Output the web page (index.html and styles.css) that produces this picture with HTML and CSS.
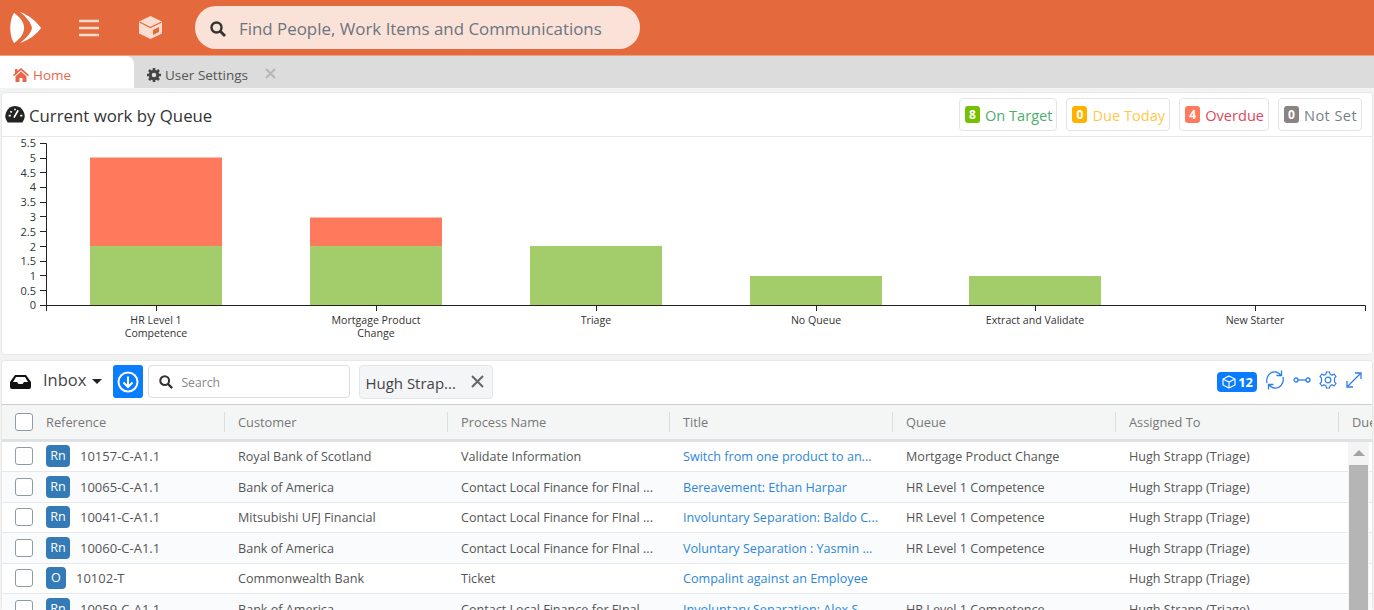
FILE: index.html
```html
<!DOCTYPE html>
<html lang="en">
<head>
    <meta charset="UTF-8">
    <meta name="viewport" content="width=device-width, initial-scale=1.0">
    <title>Home</title>
    <link rel="stylesheet" href="styles.css">
</head>
<body>
    <header class="topbar">
        <svg class="logo" width="32" height="32" viewBox="0 0 32 32"><path fill="#fff" d="M4 1C10 5 14 10 14 16C14 22 10 27 4 31C-1 24 -1 8 4 1Z"/><path fill="#fff" d="M10 0C19 3 27 10 31 16C27 22 19 28 10 31C15 27 21 22 22 16C21 10 15 4 10 0Z"/></svg>
        <svg class="menu" width="22" height="18" viewBox="0 0 22 18"><path stroke="#fbdccf" stroke-width="2.600" d="M1 2H21M1 9H21M1 16H21"/></svg>
        <svg class="cube" width="25" height="25" viewBox="0 0 25 25"><path fill="#fbdccf" d="M12.500 1L24 6.500V18.500L12.500 24L1 18.500V6.500Z"/><path fill="none" stroke="#e4693c" stroke-width="1.200" d="M1.500 7L12.500 12.500L23.500 7"/><path fill="#e4693c" d="M15 15L21 12V17L15 20Z"/></svg>
        <div class="find">
            <svg width="16" height="16" viewBox="0 0 16 16"><circle cx="6.500" cy="6.500" r="5" fill="none" stroke="#333" stroke-width="2.400"/><path stroke="#333" stroke-width="2.800" d="M10 10L15 15"/></svg>
            <span>Find People, Work Items and Communications</span>
        </div>
    </header>

    <nav class="tabs">
        <div class="tab active">
            <svg width="16" height="14" viewBox="0 0 16 14"><path fill="#e9654b" d="M8 0L16 7L15 8.300L8 2.300L1 8.300L0 7L2 5.200V1H4.500V3L8 0ZM8 3.500L13.500 8.200V14H9.500V10H6.500V14H2.500V8.200Z"/></svg>
            Home
        </div>
        <div class="tab">
            <svg width="14" height="14" viewBox="0 0 14 14"><circle cx="7" cy="7" r="3.800" fill="none" stroke="#444" stroke-width="3"/><path stroke="#444" stroke-width="2.600" d="M7 0V3M7 11V14M0 7H3M11 7H14M2 2L4 4M10 10L12 12M12 2L10 4M4 10L2 12"/></svg>
            User Settings
            <svg class="tab-close" width="11" height="11" viewBox="0 0 11 11"><path stroke="#b5b5b5" stroke-width="1.800" d="M1 1L10 10M10 1L1 10"/></svg>
        </div>
    </nav>

    <section class="card chart-card">
        <div class="card-head">
            <svg width="20" height="17" viewBox="0.500 1 19 16"><path fill="#222" d="M10 1A9.500 9.500 0 0 1 17 16.500H3A9.500 9.500 0 0 1 10 1Z"/><path stroke="#fff" stroke-width="1.600" d="M9 12L13 5M4 10H6M5.500 6L7 7M10 3.500V5M15 10H17"/></svg>
            <h2>Current work by Queue</h2>
            <div class="legend">
                <span class="pill green"><b>8</b>On Target</span>
                <span class="pill amber"><b>0</b>Due Today</span>
                <span class="pill red"><b>4</b>Overdue</span>
                <span class="pill grey"><b>0</b>Not Set</span>
            </div>
        </div>
        <svg class="chart" width="1372" height="217" viewBox="0 137 1372 217">
            <g fill="#ff7a5c">
                <rect x="90" y="157.500" width="132" height="89"/>
                <rect x="310" y="217.500" width="132" height="29"/>
            </g>
            <g fill="#a3cc6a">
                <rect x="90" y="246" width="132" height="59"/>
                <rect x="310" y="246" width="132" height="59"/>
                <rect x="530" y="246" width="132" height="59"/>
                <rect x="750" y="276" width="132" height="29"/>
                <rect x="969" y="276" width="132" height="29"/>
            </g>
            <path fill="none" stroke="#222" d="M40 143.500H46.500V305.500M40 158.500H46M40 172.500H46M40 187.500H46M40 202.500H46M40 216.500H46M40 231.500H46M40 246.500H46M40 261.500H46M40 275.500H46M40 290.500H46M40 305.500H1365.500V311M46.500 305V311M156.500 305V311M376.500 305V311M596.500 305V311M816.500 305V311M1035.500 305V311M1255.500 305V311"/>
            <g class="y-labels">
                <text x="36" y="147">5.5</text><text x="36" y="162">5</text><text x="36" y="177">4.5</text><text x="36" y="191">4</text><text x="36" y="206">3.5</text><text x="36" y="221">3</text><text x="36" y="236">2.5</text><text x="36" y="251">2</text><text x="36" y="265">1.5</text><text x="36" y="280">1</text><text x="36" y="295">0.5</text><text x="36" y="309">0</text>
            </g>
            <g class="x-labels">
                <text x="156" y="324">HR Level 1</text><text x="156" y="337">Competence</text>
                <text x="376" y="324">Mortgage Product</text><text x="376" y="337">Change</text>
                <text x="596" y="324">Triage</text>
                <text x="816" y="324">No Queue</text>
                <text x="1035" y="324">Extract and Validate</text>
                <text x="1255" y="324">New Starter</text>
            </g>
        </svg>
    </section>

    <section class="card inbox-card">
        <div class="toolbar">
            <svg width="21" height="14" viewBox="0 0 21 14"><path fill="#111" fill-rule="evenodd" d="M5 0H16L21 7V12A2 2 0 0 1 19 14H2A2 2 0 0 1 0 12V7ZM6 2L3 7H7L8.500 9H12.500L14 7H18L15 2Z"/></svg>
            <span class="inbox-name">Inbox</span>
            <span class="caret"></span>
            <button class="download"><svg width="22" height="22" viewBox="0 0 22 22"><circle cx="11" cy="11" r="9.500" fill="none" stroke="#fff" stroke-width="2"/><path fill="none" stroke="#fff" stroke-width="2" d="M11 5.500V16M6.500 11.500L11 16L15.500 11.500"/></svg></button>
            <div class="search">
                <svg width="14" height="14" viewBox="0 0 16 16"><circle cx="6.500" cy="6.500" r="5" fill="none" stroke="#333" stroke-width="2.400"/><path stroke="#333" stroke-width="2.800" d="M10 10L15 15"/></svg>
                <span>Search</span>
            </div>
            <div class="filter">
                <span>Hugh Strap...</span>
                <svg width="13" height="13" viewBox="0 0 13 13"><path stroke="#666" stroke-width="2" d="M1 1L12 12M12 1L1 12"/></svg>
            </div>
            <div class="tools">
                <span class="count"><svg width="14" height="14" viewBox="0 0 14 14"><path fill="none" stroke="#fff" stroke-width="1.200" d="M7 1L13 4V10L7 13L1 10V4ZM1 4L7 7L13 4M7 7V13"/></svg>12</span>
                <svg width="20" height="20" viewBox="0 0 20 20"><path fill="none" stroke="#2f7fe8" stroke-width="1.300" d="M2 13C0.500 7 5 1 11 2C13 2.500 15 4 16 5M18 7C19.500 13 15 19 9 18C7 17.500 5 16 4 15M16.500 0.500V5.500H11.500M3.500 19.500V14.500H8.500"/></svg>
                <svg width="18" height="8" viewBox="0 0 18 8"><path fill="none" stroke="#2f7fe8" stroke-width="1.300" d="M5 4H13"/><circle cx="3" cy="4" r="2" fill="none" stroke="#2f7fe8" stroke-width="1.300"/><circle cx="15" cy="4" r="2" fill="none" stroke="#2f7fe8" stroke-width="1.300"/></svg>
                <svg width="18" height="18" viewBox="0 0 18 18"><circle cx="9" cy="9" r="2.800" fill="none" stroke="#2f7fe8" stroke-width="1.200"/><path fill="none" stroke="#2f7fe8" stroke-width="1.200" d="M7.500 1H10.500L11 3.200L13 4.200L15 3L17 5.500L15.500 7.200V10.800L17 12.500L15 15L13 13.800L11 14.800L10.500 17H7.500L7 14.800L5 13.800L3 15L1 12.500L2.500 10.800V7.200L1 5.500L3 3L5 4.200L7 3.200Z"/></svg>
                <svg width="18" height="18" viewBox="0 0 18 18"><path fill="none" stroke="#2f7fe8" stroke-width="1.300" d="M2 16L16 2M10 2H16V8M2 10V16H8"/></svg>
            </div>
        </div>

        <div class="grid">
            <div class="row head">
                <div class="cell first"><span class="check"></span>Reference</div>
                <div class="cell">Customer</div>
                <div class="cell">Process Name</div>
                <div class="cell">Title</div>
                <div class="cell">Queue</div>
                <div class="cell">Assigned To</div>
                <div class="cell">Due</div>
            </div>
            <div class="row">
                <div class="cell first"><span class="check"></span><span class="type">Rn</span><span class="ref">10157-C-A1.1</span></div>
                <div class="cell">Royal Bank of Scotland</div>
                <div class="cell">Validate Information</div>
                <div class="cell link">Switch from one product to an...</div>
                <div class="cell">Mortgage Product Change</div>
                <div class="cell">Hugh Strapp (Triage)</div>
            </div>
            <div class="row alt">
                <div class="cell first"><span class="check"></span><span class="type">Rn</span><span class="ref">10065-C-A1.1</span></div>
                <div class="cell">Bank of America</div>
                <div class="cell">Contact Local Finance for FInal ...</div>
                <div class="cell link">Bereavement: Ethan Harpar</div>
                <div class="cell">HR Level 1 Competence</div>
                <div class="cell">Hugh Strapp (Triage)</div>
            </div>
            <div class="row">
                <div class="cell first"><span class="check"></span><span class="type">Rn</span><span class="ref">10041-C-A1.1</span></div>
                <div class="cell">Mitsubishi UFJ Financial</div>
                <div class="cell">Contact Local Finance for FInal ...</div>
                <div class="cell link">Involuntary Separation: Baldo C...</div>
                <div class="cell">HR Level 1 Competence</div>
                <div class="cell">Hugh Strapp (Triage)</div>
            </div>
            <div class="row alt">
                <div class="cell first"><span class="check"></span><span class="type">Rn</span><span class="ref">10060-C-A1.1</span></div>
                <div class="cell">Bank of America</div>
                <div class="cell">Contact Local Finance for FInal ...</div>
                <div class="cell link">Voluntary Separation : Yasmin ...</div>
                <div class="cell">HR Level 1 Competence</div>
                <div class="cell">Hugh Strapp (Triage)</div>
            </div>
            <div class="row">
                <div class="cell first"><span class="check"></span><span class="type short">O</span><span class="ref">10102-T</span></div>
                <div class="cell">Commonwealth Bank</div>
                <div class="cell">Ticket</div>
                <div class="cell link">Compalint against an Employee</div>
                <div class="cell"></div>
                <div class="cell">Hugh Strapp (Triage)</div>
            </div>
            <div class="row alt">
                <div class="cell first"><span class="check"></span><span class="type">Rn</span><span class="ref">10059-C-A1.1</span></div>
                <div class="cell">Bank of America</div>
                <div class="cell">Contact Local Finance for FInal ...</div>
                <div class="cell link">Involuntary Separation: Alex S...</div>
                <div class="cell">HR Level 1 Competence</div>
                <div class="cell">Hugh Strapp (Triage)</div>
            </div>
            <div class="scrollbar"><span class="arrow"></span><span class="thumb"></span></div>
        </div>
    </section>
</body>
</html>
```

FILE: styles.css
```css
html, body {
    height: 100%;
    overflow: hidden;
}
body {
    font-family: "Open Sans", Arial, sans-serif;
    margin: 0;
    padding: 0;
    background-color: #f2f2f2;
    color: #444;
}
.topbar {
    height: 55px;
    background-color: #e4693c;
    display: flex;
    align-items: center;
    border-bottom: 1px solid #f0a080;
}
.logo {
    margin-left: 10px;
}
.menu {
    margin-left: 36px;
}
.cube {
    margin-left: 38px;
}
.find {
    margin-left: 32px;
    width: 445px;
    height: 43px;
    box-sizing: border-box;
    padding-left: 15px;
    padding-top: 2px;
    background-color: #fbe2d9;
    border-radius: 21px;
    display: flex;
    align-items: center;
    gap: 13px;
    font-size: 16.900px;
    color: #6c757d;
}
.tabs {
    height: 32px;
    background-color: #dcdcdc;
    display: flex;
}
.tab {
    display: flex;
    align-items: center;
    gap: 4px;
    font-size: 13.500px;
    padding-left: 13px;
    padding-top: 6px;
    box-sizing: border-box;
    color: #555;
}
.tab.active {
    width: 134px;
    background-color: #fff;
    color: #e9654b;
    border-radius: 0 8px 0 0;
}
.tab-close {
    margin-left: 13px;
    margin-top: -3px;
}
.card {
    background-color: #fff;
    border: 1px solid #e8e8e8;
    border-radius: 4px;
    box-sizing: border-box;
    margin: 0 1px;
}
.chart-card {
    margin-top: 4px;
    height: 263px;
}
.card-head {
    height: 43px;
    display: flex;
    align-items: center;
    gap: 4px;
    padding-left: 3px;
    border-bottom: 1px solid #e8e8e8;
}
h2 {
    margin: 0;
    padding-top: 2px;
    font-size: 16.800px;
    font-weight: 400;
    color: #333;
}
.legend {
    margin-left: auto;
    margin-right: 10px;
    display: flex;
    gap: 9px;
}
.pill {
    height: 33px;
    box-sizing: border-box;
    display: flex;
    align-items: center;
    gap: 5px;
    padding: 0 4px 0 5px;
    border: 1px solid #e4e4e4;
    border-radius: 4px;
    font-size: 14.600px;
}
.pill b {
    width: 15px;
    height: 17px;
    border-radius: 3px;
    color: #fff;
    font-size: 12px;
    text-align: center;
    line-height: 17px;
}
.green { color: #4cae6e; }
.green b { background-color: #76c000; }
.amber { color: #ffc84a; }
.amber b { background-color: #ffb300; }
.red { color: #e0485a; }
.red b { background-color: #ff7a5c; }
.grey { color: #777f88; letter-spacing: .4px; }
.grey b { background-color: #8a8380; }
.chart {
    display: block;
    margin-left: -2px;
}
.chart text {
    font-family: "Open Sans", Arial, sans-serif;
}
.y-labels text {
    font-size: 11px;
    text-anchor: end;
    fill: #333;
}
.x-labels text {
    font-size: 10.600px;
    text-anchor: middle;
    fill: #333;
}
.inbox-card {
    margin-top: 5px;
    height: 250px;
}
.toolbar {
    height: 43px;
    display: flex;
    align-items: center;
    padding-left: 8px;
    padding-bottom: 2px;
    box-sizing: border-box;
}
.inbox-name {
    margin-left: 12px;
    font-size: 16.500px;
    color: #444;
    margin-top: -5px;
}
.caret {
    margin-left: 6px;
    margin-top: -1px;
    border-left: 5px solid transparent;
    border-right: 5px solid transparent;
    border-top: 5px solid #222;
}
.download {
    margin-left: 11px;
    width: 30px;
    height: 33px;
    padding: 0;
    border: 0;
    border-radius: 3px;
    background-color: #0a7cff;
    display: flex;
    align-items: center;
    justify-content: center;
}
.search {
    margin-left: 5px;
    width: 202px;
    height: 33px;
    box-sizing: border-box;
    border: 1px solid #ddd;
    border-radius: 4px;
    display: flex;
    align-items: center;
    gap: 8px;
    padding-left: 10px;
    font-size: 12.200px;
    color: #888;
}
.search span {
    padding-top: 2px;
}
.filter {
    margin-left: 9px;
    width: 134px;
    height: 34px;
    box-sizing: border-box;
    background-color: #f4f5f6;
    border: 1px solid #e6e6e6;
    border-radius: 4px;
    display: flex;
    align-items: center;
    justify-content: space-between;
    padding: 0 8px 0 5px;
    font-size: 15px;
    color: #444;
}
.filter span {
    padding-top: 2px;
}
.tools {
    margin-left: auto;
    margin-right: 9px;
    margin-top: -4px;
    display: flex;
    align-items: center;
    gap: 8px;
}
.count {
    display: flex;
    align-items: center;
    gap: 2px;
    height: 20px;
    margin-top: 4px;
    padding: 0 4px 0 5px;
    border-radius: 4px;
    background-color: #0a7cff;
    color: #fff;
    font-size: 13px;
    font-weight: 700;
}
.grid {
    position: relative;
    overflow: hidden;
    height: 205px;
    border-top: 1px solid #ccc;
}
.row {
    height: 30.500px;
    box-sizing: border-box;
    display: grid;
    grid-template-columns: 222px 223px 222px 223px 223px 223px 223px;
    align-items: center;
    border-bottom: 1px solid #e6e9ec;
    font-size: 12.600px;
    color: #555;
}
.row.alt {
    background-color: #fafbfd;
}
.row.head {
    height: 36.500px;
    background-color: #f4f6f6;
    border-bottom: 3px solid #dfe2e4;
    color: #777;
    font-size: 12.800px;
}
.cell {
    padding-left: 14px;
    padding-top: 1px;
    white-space: nowrap;
    overflow: hidden;
}
.head .cell {
    border-right: 1px solid #ddd;
    margin-right: -1px;
    line-height: 20px;
    padding-top: 0;
    margin-top: 1px;
}
.cell.first {
    padding-left: 13px;
    padding-top: 0;
    display: flex;
    align-items: center;
}
.check {
    width: 18px;
    height: 18px;
    box-sizing: border-box;
    border: 1.500px solid #8f9ba3;
    border-radius: 3px;
    margin-right: 13px;
    flex: none;
    background-color: #fff;
}
.ref {
    font-size: 13px;
}
.link {
    color: #2d87d8;
}
.type {
    width: 24px;
    height: 22px;
    margin-right: 10px;
    border-radius: 4px;
    background-color: #337ab7;
    color: #fff;
    text-align: center;
    line-height: 22px;
    flex: none;
}
.type.short {
    width: 20px;
    margin-right: 10px;
}
.scrollbar {
    position: absolute;
    top: 37px;
    right: 3px;
    width: 21px;
    bottom: 0;
    background-color: #f4f4f4;
    display: flex;
    flex-direction: column;
    align-items: center;
}
.arrow {
    margin-top: 8px;
    border-left: 6px solid transparent;
    border-right: 6px solid transparent;
    border-bottom: 6px solid #a3a3a3;
}
.thumb {
    margin-top: 9px;
    width: 19px;
    flex: 1;
    background-color: #b5b5b5;
}
```
